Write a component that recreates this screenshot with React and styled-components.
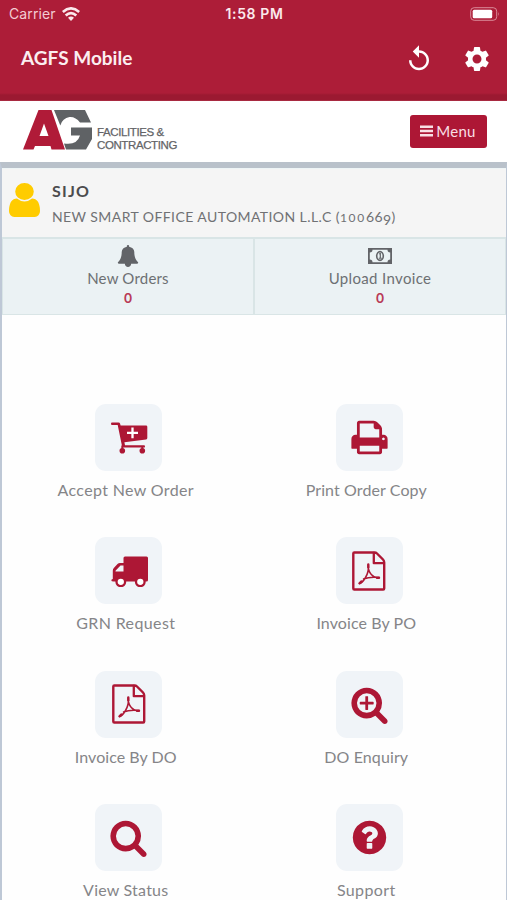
import React from "react"
import styled, { createGlobalStyle } from "styled-components"
import { MdReplay, MdSettings } from "react-icons/md"

const GlobalStyle = createGlobalStyle`
    * {
        box-sizing: border-box;
    }
    body {
        margin: 0;
        background: #fefefe;
        overflow: hidden;
        font-family: "Lato", "Open Sans", sans-serif;
    }
`;

const Screen = styled.div`
    width: 507px;
    height: 900px;
    overflow: hidden;
    display: flex;
    flex-direction: column;
    background: #fefefe;
`;

const StatusBar = styled.div`
    height: 28px;
    flex: none;
    display: grid;
    grid-template-columns: 1fr auto 1fr;
    align-items: center;
    padding: 0 7px 1px 9px;
    background: #ad1d38;
    color: #fbe9ec;
    font-family: "Inter", sans-serif;
    font-size: 14px;
`;

const Carrier = styled.div`
    display: flex;
    align-items: center;
    gap: 6px;
    color: #f3ccd3;
    letter-spacing: 0.1px;
`;

const Clock = styled.div`
    font-size: 14px;
    font-weight: 600;
    letter-spacing: 0.6px;
`;

const BatteryIcon = styled.svg`
    justify-self: end;
    display: block;
`;

const AppBar = styled.div`
    height: 73px;
    flex: none;
    display: flex;
    align-items: center;
    padding: 0 15px 14px 21px;
    background: linear-gradient(#ad1d38 0 65px, #9b1931 67px 72px, #b53a50 73px);
    color: white;
`;

const AppTitle = styled.h1`
    flex: 1;
    margin: 0;
    font-size: 19px;
    font-weight: 700;
    color: #fbeef0;
`;

const BarActions = styled.div`
    display: flex;
    align-items: center;
    gap: 28px;
    padding-top: 2px;
`;

const Header = styled.header`
    height: 61px;
    flex: none;
    display: flex;
    align-items: center;
    justify-content: space-between;
    padding: 0 20px 0 23px;
    background: white;
`;

const Brand = styled.div`
    display: flex;
    align-items: flex-end;
    gap: 5px;
    padding-bottom: 3px;
`;

const BrandText = styled.div`
    margin-bottom: -2px;
    font-family: "Liberation Sans", sans-serif;
    font-size: 11.5px;
    line-height: 13px;
    letter-spacing: -0.4px;
    color: #636467;
    -webkit-text-stroke: 0.25px #636467;
`;

const MenuButton = styled.button`
    display: flex;
    align-items: center;
    justify-content: center;
    gap: 3px;
    width: 77px;
    height: 33px;
    padding: 0 1px 1px 0;
    border: 0;
    border-radius: 3px;
    background: #ad1735;
    color: #f9dfe4;
    font-family: inherit;
    font-size: 15px;
    letter-spacing: 0.3px;
`;

const Page = styled.main`
    flex: 1;
    min-height: 0;
    border: solid #bec8d6;
    border-width: 6px 1px 0 2px;
    border-top-color: #b9c1ca;
    background: #fefefe;
`;

const UserCard = styled.section`
    display: flex;
    gap: 12px;
    height: 69px;
    padding: 13px 8px 0 7px;
    background: #f5f5f5;
    border-top: 1px solid #eef5f6;
`;

const UserIcon = styled.svg`
    display: block;
    flex: none;
    margin-top: 1px;
    fill: #ffcc00;
`;

const UserName = styled.div`
    font-size: 16px;
    line-height: 18px;
    font-weight: 700;
    letter-spacing: 1.2px;
    color: #4c4c4e;
`;

const Company = styled.div`
    margin-top: 8px;
    font-size: 14px;
    line-height: 18px;
    letter-spacing: 0.42px;
    white-space: nowrap;
    color: #707174;
`;

// old-style figures: 0 and 1 at x-height, 9 hanging under the baseline
const LowFigures = styled.span`
    font-size: 12px;
    letter-spacing: 1.7px;
`;

const HangingFigure = styled.span`
    display: inline-block;
    line-height: 1;
    vertical-align: -3px;
`;

const Counters = styled.section`
    display: grid;
    grid-template-columns: 1fr 1fr;
    height: 78px;
    margin-bottom: 89px;
`;

const Counter = styled.div`
    display: flex;
    flex-direction: column;
    align-items: center;
    padding-top: 5px;
    background: #ebf2f4;
    border: 1px solid #d9e5e6;
    border-top-width: 2px;
    color: #626468;
`;

const CounterIcon = styled.div`
    display: flex;
    align-items: center;
    height: 24px;
`;

const CounterLabel = styled.div`
    font-size: 15px;
    line-height: 20px;
    letter-spacing: ${props => props.$spacing}px;
    color: #6d7073;
`;

const CounterValue = styled.div`
    font-family: "Inter", sans-serif;
    font-size: 13px;
    line-height: 20px;
    font-weight: 600;
    color: #b93a57;
`;

const Tiles = styled.section`
    display: grid;
    grid-template-columns: 240.5px 240.5px;
    grid-auto-rows: 133.3px;
    padding-left: 3.5px;
`;

const Tile = styled.div`
    display: flex;
    flex-direction: column;
    align-items: center;
`;

const TileIcon = styled.div`
    display: flex;
    align-items: center;
    justify-content: center;
    width: 67px;
    height: 67px;
    margin-left: 5.5px;
    border-radius: 11px;
    background: #f0f4f8;
    color: #ad1735;
`;

const TileLabel = styled.div`
    margin-top: 8px;
    font-size: 16px;
    line-height: 22px;
    letter-spacing: ${props => props.$spacing}px;
    white-space: nowrap;
    color: #858588;
`;

const Svg = styled.svg`
    display: block;
    flex: none;
    fill: currentColor;
`;

const Glyph = ({ size, d }) => (
    <Svg width={size} height={size} viewBox="0 0 1792 1792">
        <path d={d} />
    </Svg>
)

const userPath = "M1536 1399q0 109-62.5 187t-150.5 78h-854q-88 0-150.5-78t-62.5-187q0-85 8.5-160.5t31.5-152 58.5-131 94-89 134.5-34.5q131 128 313 128t313-128q76 0 134.5 34.5t94 89 58.5 131 31.5 152 8.5 160.5zm-256-887q0 159-112.5 271.5t-271.5 112.5-271.5-112.5-112.5-271.5 112.5-271.5 271.5-112.5 271.5 112.5 112.5 271.5z"
const bellPath = "M1728 1408q0 52-38 90t-90 38h-448q0 106-75 181t-181 75-181-75-75-181h-448q-52 0-90-38t-38-90q50-42 91-88t85-119.5 74.5-158.5 50-206 19.5-260q0-152 117-282.5t307-158.5q-8-19-8-39 0-40 28-68t68-28 68 28 28 68q0 20-8 39 190 28 307 158.5t117 282.5q0 139 19.5 260t50 206 74.5 158.5 85 119.5 91 88z"
const printPath = "M448 1536h896v-256h-896v256zm0-640h896v-384h-160q-40 0-68-28t-28-68v-160h-640v640zm1152 64q0-26-19-45t-45-19-45 19-19 45 19 45 45 19 45-19 19-45zm128 0v416q0 13-9.5 22.5t-22.5 9.5h-224v160q0 40-28 68t-68 28h-960q-40 0-68-28t-28-68v-160h-224q-13 0-22.5-9.5t-9.5-22.5v-416q0-79 56.5-135.5t135.5-56.5h64v-544q0-40 28-68t68-28h672q40 0 88 20t76 48l152 152q28 28 48 76t20 88v256h64q79 0 135.5 56.5t56.5 135.5z"
const searchPath = "M1216 832q0-185-131.5-316.5t-316.5-131.5-316.5 131.5-131.5 316.5 131.5 316.5 316.5 131.5 316.5-131.5 131.5-316.5zm512 832q0 52-38 90t-90 38q-54 0-90-38l-343-342q-179 124-399 124-143 0-273.5-55.5t-225-150-150-225-55.5-273.5 55.5-273.5 150-225 225-150 273.5-55.5 273.5 55.5 225 150 150 225 55.5 273.5q0 220-124 399l343 343q37 37 37 90z"
const plusPath = "M1088 800v64q0 13-9.5 22.5t-22.5 9.5h-224v224q0 13-9.5 22.5t-22.5 9.5h-64q-13 0-22.5-9.5t-9.5-22.5v-224h-224q-13 0-22.5-9.5t-9.5-22.5v-64q0-13 9.5-22.5t22.5-9.5h224v-224q0-13 9.5-22.5t22.5-9.5h64q13 0 22.5 9.5t9.5 22.5v224h224q13 0 22.5 9.5t9.5 22.5z"
const questionPath = "M1024 1376v-192q0-14-9-23t-23-9h-192q-14 0-23 9t-9 23v192q0 14 9 23t23 9h192q14 0 23-9t9-23zm256-672q0-88-55.5-163t-138.5-116-170-41q-243 0-371 213-15 24 8 42l132 100q7 6 19 6 16 0 25-12 53-68 86-92 34-24 86-24 48 0 85.5 26t37.5 59q0 38-20 61t-68 45q-63 28-115.5 86.5t-52.5 125.5v36q0 14 9 23t23 9h192q14 0 23-9t9-23q0-19 21.5-49.5t54.5-49.5q32-18 49-28.5t46-35 44.5-48 28-60.5 12.5-81zm384 192q0 209-103 385.5t-279.5 279.5-385.5 103-385.5-103-279.5-279.5-103-385.5 103-385.5 279.5-279.5 385.5-103 385.5 103 279.5 279.5 103 385.5z"

const CartIcon = () => (
    <Svg width="38" height="34" viewBox="-1 -1.5 38 34">
        <path d="M1 0h6.5q1.300 0 1.600 1.300L9.600 3H35q1.300 0 1.300 1.300V15.500q0 1.200-1.200 1.500L13.400 19.800l.6 2.900h19q1 0 1 1.200t-1 1.200H12.300q-1 0-1.200-1L6.700 2.600H1Q0 2.600 0 1.300T1 0z" />
        <circle cx="11.300" cy="28.300" r="2.800" />
        <circle cx="31.300" cy="28.300" r="2.800" />
        <path d="M10.300 23h2v4h-2zM30.300 24h2v3h-2z" />
        <path d="M16 10.300h11M21.500 4.900v10.800" stroke="white" strokeWidth="2.300" />
    </Svg>
)

const TruckIcon = () => (
    <Svg width="40" height="32" viewBox="-2 -1.5 40 32">
        <path fillRule="evenodd" d="M14 0h21.500Q37 0 37 1.500V23.500q0 1.500-1.500 1.500H2.500Q.3 25 .3 23.800q0-1 1.500-1.300V14q0-1.500 1-2.600L6.500 7.500Q7.500 6.500 9 6.500h3.500v-5Q12.500 0 14 0zM9.500 9L4.500 14.200V15h8V9z" />
        <circle cx="9.800" cy="25.300" r="4.300" fill="white" stroke="currentColor" strokeWidth="2.300" />
        <circle cx="29.300" cy="25.300" r="4.300" fill="white" stroke="currentColor" strokeWidth="2.300" />
    </Svg>
)

const PdfIcon = () => (
    <Svg width="34" height="40" viewBox="0 0 34 40">
        <g fill="none" stroke="currentColor" strokeLinejoin="round" strokeLinecap="round">
            <path strokeWidth="2.400" d="M2.300 1.500H22.500Q24 1.500 25 2.500l6 6q1.200 1.200 1.200 3V37.500q0 1-1 1H2.300q-1 0-1-1V2.500q0-1 1-1z" />
            <path strokeWidth="2.300" d="M21.800 2v10.200h10" />
            <path strokeWidth="1.500" d="M16.300 14q.8 6.500-2.800 12.500-3.200 5.500-6 6M16.300 14q-.3 6 3 9.500 3.200 3.700 7.700 3.200M11.500 28q6-2.500 15.500-1.500" />
            <path strokeWidth="2.400" d="M16.300 13.500v3M7.500 32.300l2-1.800M25 26.700h2" />
        </g>
    </Svg>
)

const MoneyIcon = () => (
    <Svg width="24" height="16" viewBox="0 0 24 16">
        <path fillRule="evenodd" d="M0 0h24v16H0zM4.500 1.800Q4.500 4.500 1.800 4.500v7q2.700 0 2.700 2.700h15q0-2.700 2.700-2.700v-7q-2.700 0-2.700-2.700z" />
        <ellipse cx="12" cy="8" rx="3.300" ry="4.400" fill="none" stroke="currentColor" strokeWidth="1.600" />
        <path d="M10.700 6l1-1h1.200v4.800h1v1h-3.200v-1h1V6.500z" />
    </Svg>
)

const BrandMark = () => (
    <Svg width="69" height="40" viewBox="0 0 69 40">
        <path fill="#5f6265" d="M31 0H62L68 12.500H57Q52.500 6.500 46.500 7Q39.500 8 37.300 15.500z" />
        <path fill="#5f6265" d="M48 17.500H69V29L63 39.500H43L41 33.500Q54 35.500 57 25.500H48z" />
        <path fill="#b01b38" fillRule="evenodd" d="M15.500 0H28.500L42 39.500H28.500L27.500 36H12L10.500 39.500H0zM21 13.500L16.500 26H25.500z" />
    </Svg>
)

const BarsIcon = () => (
    <Svg width="13" height="12" viewBox="0 0 13 12">
        <path d="M0 .5h13V3H0zM0 4.800h13v2.400H0zM0 9h13v2.500H0z" />
    </Svg>
)

const WifiIcon = () => (
    <Svg width="18" height="14" viewBox="0 0 18 14">
        <g fill="none" stroke="#fbe9ec" strokeWidth="2.700">
            <path d="M.8 5Q9-2.200 17.200 5" />
            <path d="M3.700 8.400Q9 3.700 14.300 8.400" />
        </g>
        <path fill="#fbe9ec" d="M6 10.700q3-2.500 6 0L9 13.900z" />
    </Svg>
)

const tiles = [
    { label: "Accept New Order", spacing: 0.35, icon: <CartIcon /> },
    { label: "Print Order Copy", spacing: 0.1, icon: <Glyph size={39} d={printPath} /> },
    { label: "GRN Request", spacing: 0.38, icon: <TruckIcon /> },
    { label: "Invoice By PO", spacing: 0.08, icon: <PdfIcon /> },
    { label: "Invoice By DO", spacing: 0.05, icon: <PdfIcon /> },
    { label: "DO Enquiry", spacing: 0.1, icon: <Glyph size={39} d={searchPath + plusPath} /> },
    { label: "View Status", spacing: 0.22, icon: <Glyph size={39} d={searchPath} /> },
    { label: "Support", spacing: 0.38, icon: <Glyph size={39} d={questionPath} /> },
]

const App = () => {

    return(
        <Screen>
            <GlobalStyle />
            <StatusBar>
                <Carrier>Carrier <WifiIcon /></Carrier>
                <Clock>1:58 PM</Clock>
                <BatteryIcon width="30" height="14" viewBox="0 0 30 14">
                    <rect x=".7" y=".7" width="26" height="12.600" rx="3.500" fill="none" stroke="#d98a98" />
                    <rect x="2.700" y="2.700" width="19.500" height="8.600" rx="1.500" fill="white" />
                    <path d="M28 5q1.500 2 0 4z" fill="#d98a98" />
                </BatteryIcon>
            </StatusBar>
            <AppBar>
                <AppTitle>AGFS Mobile</AppTitle>
                <BarActions>
                    <MdReplay size={30} />
                    <MdSettings size={30} />
                </BarActions>
            </AppBar>
            <Header>
                <Brand>
                    <BrandMark />
                    <BrandText>FACILITIES &amp;<br />CONTRACTING</BrandText>
                </Brand>
                <MenuButton><BarsIcon /> Menu</MenuButton>
            </Header>
            <Page>
                <UserCard>
                    <UserIcon width="31" height="34" viewBox="256 128 1280 1536" preserveAspectRatio="none">
                        <path d={userPath} />
                    </UserIcon>
                    <div>
                        <UserName>SIJO</UserName>
                        <Company>
                            NEW SMART OFFICE AUTOMATION L.L.C (<LowFigures>100</LowFigures>66<HangingFigure>9</HangingFigure>)
                        </Company>
                    </div>
                </UserCard>
                <Counters>
                    <Counter>
                        <CounterIcon><Glyph size={22} d={bellPath} /></CounterIcon>
                        <CounterLabel $spacing={0.2}>New Orders</CounterLabel>
                        <CounterValue>0</CounterValue>
                    </Counter>
                    <Counter>
                        <CounterIcon><MoneyIcon /></CounterIcon>
                        <CounterLabel $spacing={0.35}>Upload Invoice</CounterLabel>
                        <CounterValue>0</CounterValue>
                    </Counter>
                </Counters>
                <Tiles>
                    {tiles.map(tile => (
                        <Tile key={tile.label}>
                            <TileIcon>{tile.icon}</TileIcon>
                            <TileLabel $spacing={tile.spacing}>{tile.label}</TileLabel>
                        </Tile>
                    ))}
                </Tiles>
            </Page>
        </Screen>
    )
}

export default App;
